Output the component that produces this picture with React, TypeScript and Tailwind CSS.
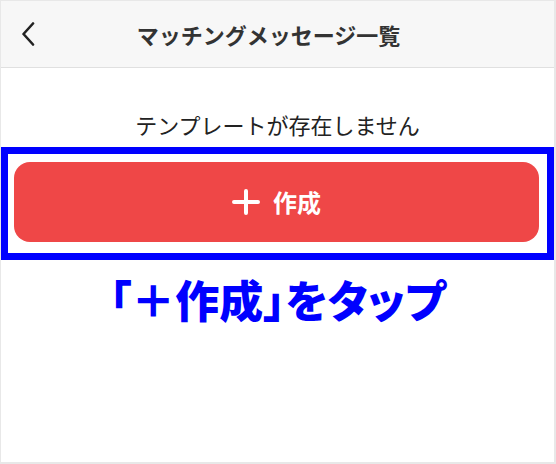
export default function App() {
  return (
    <div
      className="w-[556px] h-[464px] bg-white border-t border-l border-r-2 border-b-2 border-[#e8e8e8] flex flex-col overflow-hidden"
      style={{ fontFamily: '"Noto Sans CJK JP", "Noto Sans", sans-serif' }}
    >
      {/* header */}
      <header className="h-[67px] shrink-0 bg-[#f7f7f7] border-b border-[#e0e0e0] flex items-center px-5">
        <svg width="14" height="24" viewBox="0 0 14 24" fill="none" className="shrink-0">
          <path d="M12 1.5 L2.5 12 L12 22.5" stroke="#222" strokeWidth="2.6" strokeLinecap="round" strokeLinejoin="round" />
        </svg>
        <h1 className="flex-1 text-center text-[22px] font-bold text-[#333] pr-[32px] leading-none">
          マッチングメッセージ一覧
        </h1>
      </header>

      <p className="mt-[41px] text-center text-[22px] leading-[30px] text-[#222]">
        テンプレートが存在しません
      </p>

      {/* highlighted button */}
      <div className="mt-[8px] border-[7px] border-[#0000ff] pl-[6px] pr-[8px] pt-[8px] pb-[11px]">
        <button className="w-full h-[80px] rounded-[16px] bg-[#ef4747] flex items-center justify-center gap-[13px] text-white">
          <svg width="28" height="28" viewBox="0 0 28 28" fill="none">
            <path d="M14 3 V25 M2 14 H26" stroke="#fff" strokeWidth="4" strokeLinecap="round" />
          </svg>
          <span className="text-[24px] font-semibold leading-none">作成</span>
        </button>
      </div>

      <p className="mt-[13px] text-center text-[44px] leading-[52px] font-black text-[#0000ff] [font-feature-settings:'palt']">
        「＋作成」をタップ
      </p>
    </div>
  );
}
